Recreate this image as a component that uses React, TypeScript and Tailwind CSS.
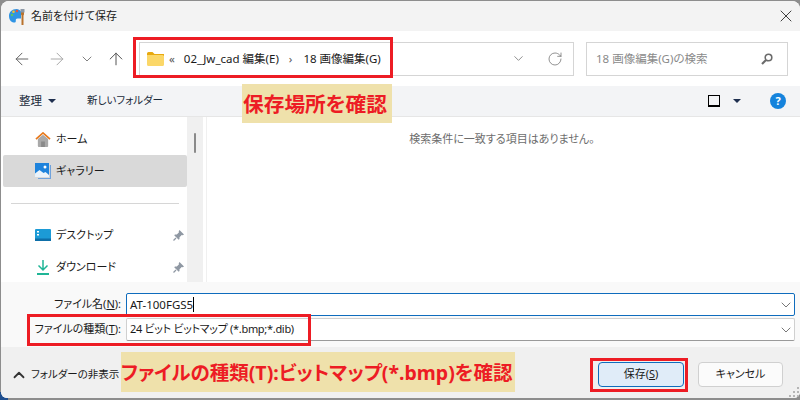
import React from 'react';
import { ArrowLeft, ArrowRight, ArrowUp, ChevronDown, ChevronUp, RotateCw, X } from 'lucide-react';

const AppIcon = () => (
  <svg width="17" height="17" viewBox="0 0 17 17">
    <path d="M7.500 1C3 1 0 4 0 8c0 3.500 2 6 4.500 6.500 2 .4 2.500-.8 2.300-2-.2-1.300.5-2 1.700-2H12V3.500C11 2 9.500 1 7.500 1z" fill="#2f94e4" />
    <circle cx="3" cy="7" r="1.300" fill="#5cc46a" />
    <circle cx="4.500" cy="3.800" r="1.300" fill="#f2c230" />
    <circle cx="8" cy="3" r="1.200" fill="#e8503d" />
    <path d="M12 4h3v2.500l-.5 1V17h-2V7.500l-.5-1z" fill="#b9722d" />
    <path d="M11.500 1h4v3.500h-4z" fill="#8b97a5" />
  </svg>
);

const FolderIcon = () => (
  <svg width="17" height="14" viewBox="0 0 17 14">
    <path d="M0 1.500A1.500 1.500 0 0 1 1.500 0h4L7.500 2H17v2H0z" fill="#e8a90f" />
    <path d="M0 3h15.500A1.500 1.500 0 0 1 17 4.500v8a1.500 1.500 0 0 1-1.500 1.500h-14A1.500 1.500 0 0 1 0 12.500z" fill="#fbd768" />
  </svg>
);

const HomeIcon = () => (
  <svg width="16" height="15" viewBox="0 0 17 16">
    <path d="M3 7.500 8.500 3 14 7.500V15a1 1 0 0 1-1 1H4a1 1 0 0 1-1-1z" fill="#a9a9a9" />
    <path d="M6.500 10h4v6h-4z" fill="#8a8a8a" />
    <path d="M1 7.500 8.500 1 16 7.500" fill="none" stroke="#e8791c" strokeWidth="1.800" />
  </svg>
);

const GalleryIcon = () => (
  <svg width="16" height="16" viewBox="0 0 16 16">
    <path d="M3 15.500h12.500V2" fill="none" stroke="#6fa2dc" strokeWidth="1.200" />
    <path d="M0 0h14v14H0z" fill="#1e83dc" />
    <path d="M0 14V10.500l4.500-3.500 4 3 2-1 3.500 3V14z" fill="#eaf3fb" />
    <circle cx="10" cy="4" r="1.500" fill="#ffffff" />
  </svg>
);

const DesktopIcon = () => (
  <svg width="16" height="12" viewBox="0 0 16 12">
    <rect width="16" height="12" rx="1" fill="#1c9bd6" />
    <rect y="9.500" width="16" height="2.500" fill="#0e6fa8" />
    <rect x="2" y="2" width="2" height="1.500" fill="#ffffff" />
    <rect x="2" y="5" width="2" height="1.500" fill="#ffffff" />
  </svg>
);

const DownloadIcon = () => (
  <svg width="12" height="15" viewBox="0 0 12 15" fill="none" stroke="#1fb596">
    <path d="M6 0v9.500M1.500 5.500 6 10l4.500-4.500" strokeWidth="1.500" />
    <path d="M0 14h12" strokeWidth="2" />
  </svg>
);

const PinIcon = () => (
  <svg width="11" height="11" viewBox="0 0 11 11">
    <path d="M6.500 0 11 4.500 9.800 5.300 8.700 5 6.500 7.200 6.500 9 5.700 9.800 1.200 5.300 2 4.500h1.800L6 2.300 5.700 1.200z" fill="#8f98a3" />
    <path d="M3 8 0.500 10.500" stroke="#8f98a3" strokeWidth="1.200" />
  </svg>
);

const SearchIcon = () => (
  <svg width="12" height="12" viewBox="0 0 12 12" fill="none" stroke="#6b6b6b">
    <circle cx="7.500" cy="4.500" r="3.300" strokeWidth="1.600" />
    <path d="M5 7 1 11" strokeWidth="2.200" />
  </svg>
);

const GripIcon = () => (
  <svg width="11" height="11" viewBox="0 0 11 11" fill="#b5b5b5">
    <rect x="8" y="0" width="2" height="2" />
    <rect x="4" y="4" width="2" height="2" />
    <rect x="8" y="4" width="2" height="2" />
    <rect x="0" y="8" width="2" height="2" />
    <rect x="4" y="8" width="2" height="2" />
    <rect x="8" y="8" width="2" height="2" />
  </svg>
);

const NavRow = ({ icon, label, pinned, selected }: { icon: React.ReactNode; label: string; pinned?: boolean; selected?: boolean }) => (
  <div className={`flex h-8 items-center rounded-[2px] pr-[3px] ${selected ? 'bg-[#d9d9d9]' : ''}`}>
    <div className="ml-[32px] flex w-4 justify-center">{icon}</div>
    <span className="ml-[5px] flex-1 text-[11px] text-[#1a1a1a]">{label}</span>
    {pinned && <PinIcon />}
  </div>
);

const Field = ({ label, value, focused, caret }: { label: React.ReactNode; value: string; focused?: boolean; caret?: boolean }) => (
  <div className="flex h-[23px] items-center">
    <span className="w-[122px] pr-[2px] text-right text-[11px] text-[#1a1a1a]">{label}</span>
    <div className={`ml-[3px] flex h-[23px] w-[669px] items-center rounded-[2px] border bg-white pl-[3px] text-[#1a1a1a] ${focused ? 'border-[#0f6cbd] text-[11.500px]' : 'border-[#d0d0d0] border-b-[#9a9a9a] text-[11px] tracking-[-0.3px]'}`}>
      <span>{value}</span>
      {caret && <span className="h-[15px] w-px bg-black" />}
      <ChevronDown className="ml-auto text-[#555555]" size={16} strokeWidth={1.200} />
    </div>
  </div>
);

export default function App() {
  return (
    <div className="relative h-[400px] w-[800px] overflow-hidden bg-[#8d8d8d] font-['Noto_Sans','Noto_Sans_CJK_JP',sans-serif] [font-feature-settings:'palt']">
      <div className="absolute bottom-0 left-0 h-2 w-2 bg-[#1f4f8f]" />
      <div className="relative ml-px mt-px flex h-[397px] w-[799px] flex-col overflow-hidden rounded-t-[8px] rounded-b-[6px] bg-white">
        {/* title bar */}
        <div className="flex h-[30px] shrink-0 items-center bg-[#f3f3f3] pl-[8px] pr-[4px]">
          <AppIcon />
          <span className="ml-[5px] text-[11px] text-[#1a1a1a]">名前を付けて保存</span>
          <X className="ml-auto text-[#1a1a1a]" size={20} strokeWidth={1} />
        </div>

        {/* address row */}
        <div className="flex h-[55px] shrink-0 items-center bg-white pl-[11px]">
          <ArrowLeft className="text-[#666666]" size={20} strokeWidth={1.200} />
          <ArrowRight className="ml-[15px] text-[#aaaaaa]" size={20} strokeWidth={1.200} />
          <ChevronDown className="ml-[12px] text-[#777777]" size={16} strokeWidth={1.400} />
          <ArrowUp className="ml-[11px] text-[#555555]" size={20} strokeWidth={1.200} />
          <div className="ml-[13px] flex h-[34px] w-[435px] items-center border border-[#d5d5d5] pl-[7px] pr-[10px] text-[11.500px] text-[#1a1a1a]">
            <FolderIcon />
            <span className="ml-[5px] text-[#555555]">«</span>
            <span className="ml-[9px]">02_Jw_cad 編集(E)</span>
            <span className="ml-[10px] text-[#555555]">›</span>
            <span className="ml-[11px]">18 画像編集(G)</span>
            <ChevronDown className="ml-auto text-[#777777]" size={15} strokeWidth={1.300} />
            <RotateCw className="ml-[21px] text-[#777777]" size={16} strokeWidth={1.200} />
          </div>
          <div className="ml-[12px] flex h-[34px] w-[202px] items-center border border-[#d5d5d5] pl-[9px] pr-[14px] text-[11.500px] text-[#8a8a8a]">
            <span>18 画像編集(G)の検索</span>
            <span className="ml-auto"><SearchIcon /></span>
          </div>
        </div>

        {/* command bar */}
        <div className="flex h-[31px] shrink-0 items-center border-b border-[#e6e6e6] bg-[#f3f4f6] pl-[18px] pr-[14px]">
          <span className="text-[11.500px] text-[#1a2a3a]">整理</span>
          <span className="ml-[6px] h-0 w-0 border-x-[4px] border-t-[4px] border-x-transparent border-t-[#1f2f4f]" />
          <span className="ml-[31px] text-[10.500px] text-[#1a2a3a]">新しいフォルダー</span>
          <span className="ml-auto h-[12px] w-[12px] border border-b-2 border-black" />
          <span className="ml-[13px] h-0 w-0 border-x-[4px] border-t-[4px] border-x-transparent border-t-[#1f2f4f]" />
          <span className="ml-[29px] flex h-4 w-4 items-center justify-center rounded-full bg-[#1583dc] text-[11px] font-bold text-white">?</span>
        </div>

        {/* body */}
        <div className="flex h-[165px] shrink-0 bg-white">
          <div className="w-[2px] bg-white" />
          <div className="w-[184px] pt-[6px]">
            <NavRow icon={<HomeIcon />} label="ホーム" />
            <NavRow icon={<GalleryIcon />} label="ギャラリー" selected />
            <div className="mx-[8px] mt-[16px] mb-[15px] h-px bg-[#d6d6d6]" />
            <NavRow icon={<DesktopIcon />} label="デスクトップ" pinned />
            <NavRow icon={<DownloadIcon />} label="ダウンロード" pinned />
          </div>
          <div className="w-[16px] bg-[#f0f0f0] pl-[7px] pt-[16px]">
            <div className="h-[20px] w-[2px] rounded-full bg-[#8a8a8a]" />
          </div>
          <div className="w-[3px] bg-white" />
          <div className="flex-1 border-l border-[#f0f0f0] pr-[3px] pt-[14px] text-center text-[11px] text-[#6d6d6d]">
            検索条件に一致する項目はありません。
          </div>
        </div>

        {/* file fields */}
        <div className="flex h-[65px] shrink-0 flex-col gap-[2px] bg-[#f9f9f9] pt-[11px]">
          <Field label={<>ファイル名(<span className="underline">N</span>):</>} value="AT-100FGS5" focused caret />
          <Field label={<>ファイルの種類(<span className="underline">T</span>):</>} value="24 ビット ビットマップ (*.bmp;*.dib)" />
        </div>

        {/* footer */}
        <div className="relative flex flex-1 items-center bg-[#f0f0f0] pl-[9px] pr-[17px] pt-[3px]">
          <div className="mt-[1px] flex items-center">
            <ChevronUp className="text-[#333333]" size={18} strokeWidth={2.400} />
            <span className="ml-[3px] text-[10.500px] text-[#1a1a1a]">フォルダーの非表示</span>
          </div>
          <button className="ml-auto h-[25px] w-[86px] rounded-[4px] border border-[#0f6cbd] bg-[#e0ecf8] text-[11px] text-[#1a1a1a]">
            保存(<span className="underline">S</span>)
          </button>
          <button className="ml-[14px] h-[25px] w-[85px] rounded-[4px] border border-[#d0d0d0] bg-[#fbfbfb] text-[11px] text-[#1a1a1a]">
            キャンセル
          </button>
          <span className="absolute bottom-0 right-0"><GripIcon /></span>
        </div>
      </div>

      {/* annotations */}
      <div className="absolute left-[133px] top-[37px] h-[41px] w-[260px] border-[3px] border-[#ed1c24]" />
      <div className="absolute left-[27px] top-[314px] h-[32px] w-[284px] border-[3px] border-[#ed1c24]" />
      <div className="absolute left-[590px] top-[358px] h-[34px] w-[98px] border-[3px] border-[#ed1c24]" />
      <div className="absolute left-[242px] top-[84px] flex h-[39px] w-[150px] items-center justify-center bg-[#efe1ab] pr-[4px] pt-[2px] text-[20.700px] font-bold text-[#ed1c24]">
        保存場所を確認
      </div>
      <div className="absolute left-[121px] top-[352px] flex h-[40px] w-[394px] items-center whitespace-nowrap bg-[#efe1ab] pt-[2px] text-[19.500px] font-bold text-[#ed1c24]">
        ファイルの種類(T):ビットマップ(*.bmp)を確認
      </div>
    </div>
  );
}
